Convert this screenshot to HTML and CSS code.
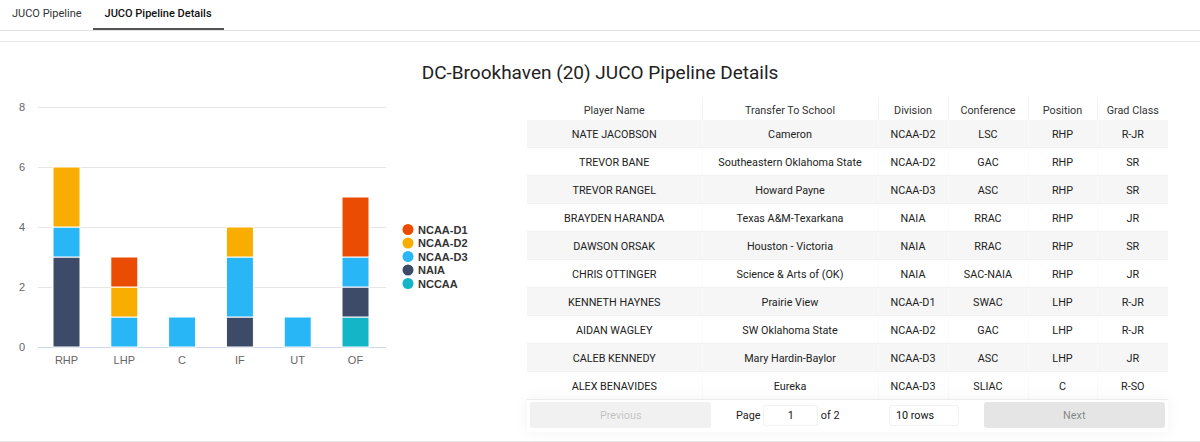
FILE: index.html
```html
<!DOCTYPE html>
<html>
<head>
    <title>JUCO Pipeline Details</title>
    <link rel="stylesheet" href="styles.css">
</head>
<body>
    <div class="tabs">
        <div class="tab">JUCO Pipeline</div>
        <div class="tab active">JUCO Pipeline Details</div>
    </div>
    <div class="divider"></div>

    <h1 class="title">DC-Brookhaven (20) JUCO Pipeline Details</h1>

    <div class="content">
        <div class="chart-col">
            <svg class="chart" width="527" height="300" viewBox="0 97 527 300">
                <g class="grid">
                    <line x1="38" y1="107.5" x2="386" y2="107.5"/>
                    <line x1="38" y1="167.5" x2="386" y2="167.5"/>
                    <line x1="38" y1="227.5" x2="386" y2="227.5"/>
                    <line x1="38" y1="287.5" x2="386" y2="287.5"/>
                </g>
                <line class="axis" x1="38" y1="347.5" x2="386" y2="347.5"/>
                <g class="ylabels">
                    <text x="25" y="111">8</text>
                    <text x="25" y="171">6</text>
                    <text x="25" y="231">4</text>
                    <text x="25" y="291">2</text>
                    <text x="25" y="351">0</text>
                </g>
                <g class="bars">
                    <!-- RHP -->
                    <rect x="53" y="257" width="27" height="90" fill="#3d4b69"/>
                    <rect x="53" y="227" width="27" height="30" fill="#29b6f6"/>
                    <rect x="53" y="167" width="27" height="60" fill="#f8ad00"/>
                    <!-- LHP -->
                    <rect x="110.8" y="317" width="27" height="30" fill="#29b6f6"/>
                    <rect x="110.8" y="287" width="27" height="30" fill="#f8ad00"/>
                    <rect x="110.8" y="257" width="27" height="30" fill="#e94c02"/>
                    <!-- C -->
                    <rect x="168.6" y="317" width="27" height="30" fill="#29b6f6"/>
                    <!-- IF -->
                    <rect x="226.4" y="317" width="27" height="30" fill="#3d4b69"/>
                    <rect x="226.4" y="257" width="27" height="60" fill="#29b6f6"/>
                    <rect x="226.4" y="227" width="27" height="30" fill="#f8ad00"/>
                    <!-- UT -->
                    <rect x="284.2" y="317" width="27" height="30" fill="#29b6f6"/>
                    <!-- OF -->
                    <rect x="342" y="317" width="27" height="30" fill="#14b5c7"/>
                    <rect x="342" y="287" width="27" height="30" fill="#3d4b69"/>
                    <rect x="342" y="257" width="27" height="30" fill="#29b6f6"/>
                    <rect x="342" y="197" width="27" height="60" fill="#e94c02"/>
                </g>
                <g class="xlabels">
                    <text x="66.5" y="364">RHP</text>
                    <text x="124.3" y="364">LHP</text>
                    <text x="182.1" y="364">C</text>
                    <text x="239.9" y="364">IF</text>
                    <text x="297.7" y="364">UT</text>
                    <text x="355.5" y="364">OF</text>
                </g>
                <g class="legend">
                    <circle cx="408" cy="229.5" r="5.5" fill="#e94c02"/>
                    <text x="418" y="233.5">NCAA-D1</text>
                    <circle cx="408" cy="243" r="5.5" fill="#f8ad00"/>
                    <text x="418" y="247">NCAA-D2</text>
                    <circle cx="408" cy="256.5" r="5.5" fill="#29b6f6"/>
                    <text x="418" y="260.5">NCAA-D3</text>
                    <circle cx="408" cy="270" r="5.5" fill="#3d4b69"/>
                    <text x="418" y="274">NAIA</text>
                    <circle cx="408" cy="283.5" r="5.5" fill="#14b5c7"/>
                    <text x="418" y="287.5">NCCAA</text>
                </g>
            </svg>
        </div>

        <div class="table-col">
            <table class="pipeline-table">
                <colgroup>
                    <col style="width: 175px">
                    <col style="width: 176px">
                    <col style="width: 70px">
                    <col style="width: 80px">
                    <col style="width: 69px">
                    <col style="width: 71px">
                </colgroup>
                <thead>
                    <tr>
                        <th>Player Name</th>
                        <th>Transfer To School</th>
                        <th>Division</th>
                        <th>Conference</th>
                        <th>Position</th>
                        <th>Grad Class</th>
                    </tr>
                </thead>
                <tbody>
                    <tr class="striped"><td>NATE JACOBSON</td><td>Cameron</td><td>NCAA-D2</td><td>LSC</td><td>RHP</td><td>R-JR</td></tr>
                    <tr><td>TREVOR BANE</td><td>Southeastern Oklahoma State</td><td>NCAA-D2</td><td>GAC</td><td>RHP</td><td>SR</td></tr>
                    <tr class="striped"><td>TREVOR RANGEL</td><td>Howard Payne</td><td>NCAA-D3</td><td>ASC</td><td>RHP</td><td>SR</td></tr>
                    <tr><td>BRAYDEN HARANDA</td><td>Texas A&amp;M-Texarkana</td><td>NAIA</td><td>RRAC</td><td>RHP</td><td>JR</td></tr>
                    <tr class="striped"><td>DAWSON ORSAK</td><td>Houston - Victoria</td><td>NAIA</td><td>RRAC</td><td>RHP</td><td>SR</td></tr>
                    <tr><td>CHRIS OTTINGER</td><td>Science &amp; Arts of (OK)</td><td>NAIA</td><td>SAC-NAIA</td><td>RHP</td><td>JR</td></tr>
                    <tr class="striped"><td>KENNETH HAYNES</td><td>Prairie View</td><td>NCAA-D1</td><td>SWAC</td><td>LHP</td><td>R-JR</td></tr>
                    <tr><td>AIDAN WAGLEY</td><td>SW Oklahoma State</td><td>NCAA-D2</td><td>GAC</td><td>LHP</td><td>R-JR</td></tr>
                    <tr class="striped"><td>CALEB KENNEDY</td><td>Mary Hardin-Baylor</td><td>NCAA-D3</td><td>ASC</td><td>LHP</td><td>JR</td></tr>
                    <tr><td>ALEX BENAVIDES</td><td>Eureka</td><td>NCAA-D3</td><td>SLIAC</td><td>C</td><td>R-SO</td></tr>
                </tbody>
            </table>

            <div class="pagination">
                <div class="previous">
                    <button class="btn" disabled>Previous</button>
                </div>
                <div class="center">
                    <span class="page-info">Page <input class="page-jump" type="text" value="1"> of 2</span>
                    <span class="page-size">
                        <select>
                            <option>10 rows</option>
                            <option>20 rows</option>
                        </select>
                    </span>
                </div>
                <div class="next">
                    <button class="btn">Next</button>
                </div>
            </div>
        </div>
    </div>
</body>
</html>
```

FILE: styles.css
```css
body {
    font-family: Roboto, Arial, sans-serif;
    background-color: #fff;
    color: #222;
    margin: 0;
}

.tabs {
    display: flex;
    height: 30px;
    border-bottom: 1px solid #e2e2e2;
}

.tab {
    padding: 0 12px;
    font-size: 11px;
    line-height: 28px;
    color: #333;
    border-bottom: 2px solid transparent;
}

.tab:first-child {
    padding-right: 11px;
}

.tab.active {
    font-weight: 500;
    color: #111;
    border-bottom-color: #555;
}

.divider {
    margin-top: 10px;
    border-top: 1px solid #e8e8e8;
}

.title {
    margin: 19px 0 12px;
    font-size: 19px;
    line-height: 24px;
    font-weight: 400;
    color: #222;
    text-align: center;
}

.content {
    display: flex;
    padding-bottom: 9px;
    border-bottom: 1px solid #e8e8e8;
}

.chart-col {
    width: 527px;
    flex-shrink: 0;
}

.chart {
    display: block;
    font-family: "Liberation Sans", Arial, sans-serif;
}

.grid line {
    stroke: #e6e6e6;
    stroke-width: 1;
}

.axis {
    stroke: #ccd6eb;
    stroke-width: 1;
}

.ylabels text {
    font-size: 11px;
    fill: #666;
    text-anchor: end;
}

.xlabels text {
    font-size: 11px;
    fill: #666;
    text-anchor: middle;
}

.bars rect {
    stroke: #fff;
    stroke-width: 1;
}

.legend text {
    font-size: 11px;
    font-weight: bold;
    fill: #333;
}

.table-col {
    width: 641px;
    display: flex;
    flex-direction: column;
}

.pipeline-table {
    width: 641px;
    table-layout: fixed;
    border-collapse: collapse;
    font-size: 10.8px;
}

.pipeline-table th {
    padding: 7px 5px 3px;
    line-height: 13px;
    font-weight: 400;
    color: #333;
    border-right: 1px solid rgba(0, 0, 0, 0.05);
}

.pipeline-table th:last-child,
.pipeline-table td:last-child {
    border-right: none;
}

.pipeline-table td {
    padding: 8px 5px 6px;
    line-height: 13px;
    height: 13px;
    text-align: center;
    color: #222;
    white-space: nowrap;
    overflow: hidden;
    border-right: 1px solid rgba(0, 0, 0, 0.02);
    border-bottom: 1px solid rgba(0, 0, 0, 0.05);
}

.pipeline-table tbody tr:last-child td {
    border-bottom: none;
}

.pipeline-table tr.striped td {
    background-color: #f6f6f6;
}

.pagination {
    display: flex;
    padding: 2px 3px 3px;
    font-size: 10.8px;
    border-top: 1px solid rgba(0, 0, 0, 0.08);
    box-shadow: 0 0 15px 0 rgba(0, 0, 0, 0.05);
}

.previous,
.next {
    flex: 1;
    text-align: center;
}

.center {
    flex: 1.5;
    display: flex;
    align-items: center;
    justify-content: space-around;
}

.btn {
    display: block;
    width: 100%;
    height: 26px;
    border: none;
    border-radius: 3px;
    background-color: rgba(0, 0, 0, 0.1);
    color: rgba(0, 0, 0, 0.45);
    font-family: Roboto, Arial, sans-serif;
    font-size: 10.8px;
}

.btn:disabled {
    opacity: 0.5;
}

.page-info {
    margin: 3px 10px;
    color: #222;
    white-space: nowrap;
}

.page-jump {
    width: 55px;
    height: 21px;
    box-sizing: border-box;
    padding: 0 5px;
    border: 1px solid rgba(0, 0, 0, 0.05);
    border-radius: 3px;
    font-family: Roboto, Arial, sans-serif;
    font-size: 10.8px;
    text-align: center;
    color: #111;
    background-color: #fff;
}

.page-size {
    margin: 3px 10px;
}

.page-size select {
    width: 70px;
    height: 21px;
    padding: 0 6px;
    border: 1px solid rgba(0, 0, 0, 0.05);
    border-radius: 3px;
    background-color: #fff;
    font-family: Roboto, Arial, sans-serif;
    font-size: 10.8px;
    color: #111;
    appearance: none;
}
```
